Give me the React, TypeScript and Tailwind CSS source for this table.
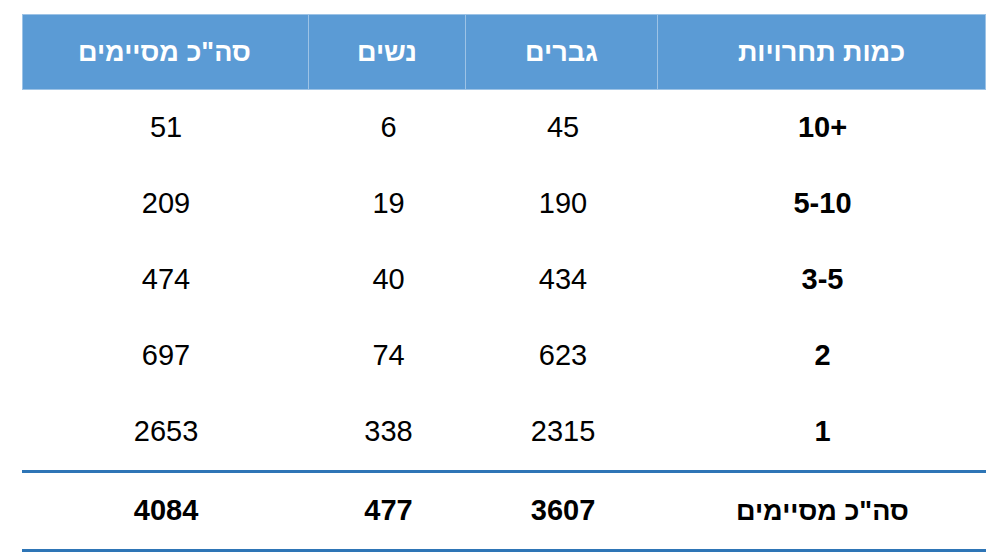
import React from "react";

const rows = [
  { label: "10+", men: "45", women: "6", total: "51" },
  { label: "5-10", men: "190", women: "19", total: "209" },
  { label: "3-5", men: "434", women: "40", total: "474" },
  { label: "2", men: "623", women: "74", total: "697" },
  { label: "1", men: "2315", women: "338", total: "2653" },
];

const cols = "grid grid-cols-[327px_192px_157px_288px]";

export default function App() {
  return (
    <div className="min-h-screen bg-white pt-[14px] pl-[22px] font-['Liberation_Sans',Arial,sans-serif] text-black">
      <div dir="rtl" className="w-[964px]">
        {/* Header */}
        <div className={`${cols} h-[76px] bg-[#5b9bd5] border border-[#9dc3e6] text-white font-bold text-[27px]`}>
          <div className="flex items-center justify-center">כמות תחרויות</div>
          <div className="flex items-center justify-center border-r border-[#9dc3e6]">גברים</div>
          <div className="flex items-center justify-center border-r border-[#9dc3e6]">נשים</div>
          <div className="flex items-center justify-center border-r border-[#9dc3e6]">סה"כ מסיימים</div>
        </div>

        {/* Body */}
        {rows.map((r) => (
          <div key={r.label} className={`${cols} h-[76px] text-[29px]`}>
            <div className="flex items-center justify-center font-bold" dir="ltr">{r.label}</div>
            <div className="flex items-center justify-center">{r.men}</div>
            <div className="flex items-center justify-center">{r.women}</div>
            <div className="flex items-center justify-center">{r.total}</div>
          </div>
        ))}

        {/* Total */}
        <div className={`${cols} h-[82px] border-y-[3px] border-[#2e75b6] font-bold text-[29px]`}>
          <div className="flex items-center justify-center text-[27px]">סה"כ מסיימים</div>
          <div className="flex items-center justify-center">3607</div>
          <div className="flex items-center justify-center">477</div>
          <div className="flex items-center justify-center">4084</div>
        </div>
      </div>
    </div>
  );
}
